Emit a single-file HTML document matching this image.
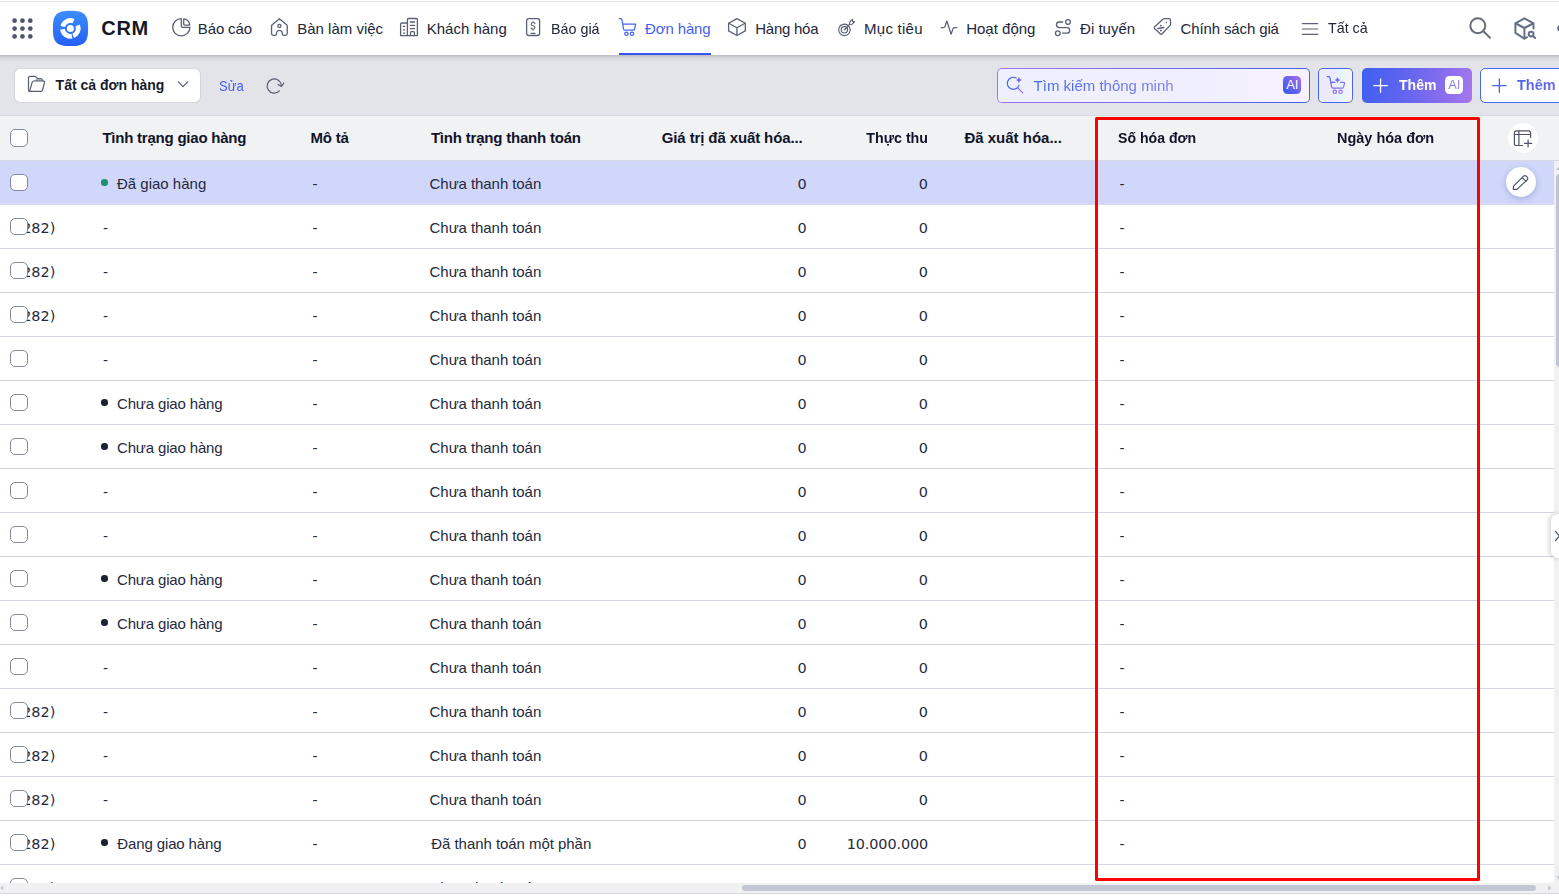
<!DOCTYPE html>
<html lang="vi"><head><meta charset="utf-8"><title>CRM - Đơn hàng</title>
<style>

*{box-sizing:border-box;margin:0;padding:0}
html,body{width:1559px;height:896px;overflow:hidden;background:#e2e4e9}
body{position:relative;font-family:"Liberation Sans", Arial, sans-serif;font-size:15px;color:#1c2133;line-height:20px}
span{white-space:nowrap;line-height:20px;display:block}
.abs{position:absolute}
#top{position:absolute;left:0;top:0;width:1559px;height:55px;background:#fff}
#topline{position:absolute;left:0;top:1px;width:1559px;height:1px;background:#e4e4e4}
#shadow{position:absolute;left:0;top:55px;width:1559px;height:6px;background:linear-gradient(to bottom,rgba(62,64,74,.24),rgba(62,64,74,.09) 45%,rgba(62,64,74,0))}
#thead{position:absolute;left:0;top:115px;width:1559px;height:46px;background:#f1f2f4;border-top:1px solid #d9dbe1;border-bottom:1px solid #d6d9e0}
#tbody{position:absolute;left:0;top:161px;width:1554px;height:735px;background:#fff;overflow:hidden}
.row{position:absolute;left:0;width:1554px;height:44px;border-bottom:1px solid #d4d8e2}
.row.sel{background:#d0d7fa;border-bottom-color:#d9dcec}
.cb{position:absolute;left:10px;width:18px;height:17px;border:1px solid #8289a0;border-radius:5px;background:#fff}
.dot{position:absolute;width:6.6px;height:6.6px;border-radius:50%;background:#1c2133}
#icons{position:absolute;left:0;top:0;width:1559px;height:896px;pointer-events:none}
.grad{-webkit-background-clip:text;background-clip:text;color:transparent!important;-webkit-text-fill-color:transparent}

</style></head><body>
<div id="top"></div><div id="topline"></div><div id="shadow"></div>
<span style="position:absolute;left:101.20px;top:18.07px;font-size:20px;font-weight:700;color:#14182a;letter-spacing:0.750px;">CRM</span>
<span style="position:absolute;left:197.80px;top:18.80px;font-size:15px;color:#222739;letter-spacing:-0.133px;">Báo cáo</span>
<span style="position:absolute;left:297.20px;top:18.80px;font-size:15px;color:#222739;">Bàn làm việc</span>
<span style="position:absolute;left:426.70px;top:18.80px;font-size:15px;color:#222739;">Khách hàng</span>
<span style="position:absolute;left:551.10px;top:18.80px;font-size:15px;color:#222739;transform:scaleX(0.9549);transform-origin:0 50%;">Báo giá</span>
<span style="position:absolute;left:645.10px;top:18.80px;font-size:15px;color:#4361ee;letter-spacing:-0.143px;">Đơn hàng</span>
<span style="position:absolute;left:755.20px;top:18.80px;font-size:15px;color:#222739;letter-spacing:-0.243px;">Hàng hóa</span>
<span style="position:absolute;left:864.10px;top:18.80px;font-size:15px;color:#222739;letter-spacing:0.243px;">Mục tiêu</span>
<span style="position:absolute;left:966.20px;top:18.80px;font-size:15px;color:#222739;">Hoạt động</span>
<span style="position:absolute;left:1080.10px;top:18.80px;font-size:15px;color:#222739;">Đi tuyến</span>
<span style="position:absolute;left:1180.50px;top:18.80px;font-size:15px;color:#222739;letter-spacing:-0.123px;">Chính sách giá</span>
<span style="position:absolute;left:1328.20px;top:17.80px;font-size:15px;color:#222739;transform:scaleX(0.9524);transform-origin:0 50%;">Tất cả</span>
<div class="abs" style="left:619px;top:53px;width:92px;height:2px;background:#3554ee"></div>
<div class="abs" style="left:15px;top:68.5px;width:185px;height:33.5px;background:#fff;border-radius:5px;box-shadow:0 0 0 .6px rgba(150,158,180,.35)"></div>
<span style="position:absolute;left:55.60px;top:75.15px;font-size:14px;font-weight:700;color:#171b2d;">Tất cả đơn hàng</span>
<span style="position:absolute;left:219.20px;top:75.80px;font-size:15px;color:#4a5cf6;transform:scaleX(0.8714);transform-origin:0 50%;">Sửa</span>
<div class="abs" style="left:997px;top:68px;width:313px;height:35px;border-radius:5px;padding:1.2px;background:linear-gradient(90deg,#a571ef 0%,#7a6af0 45%,#3f62f1 100%)"><div style="width:100%;height:100%;border-radius:3.8px;background:linear-gradient(90deg,#eeeffd,#f0effd 60%,#f7f1fd)"></div></div>
<span class="grad" style="position:absolute;left:1033.60px;top:75.80px;font-size:15px;color:#5a74ea;background-image:linear-gradient(90deg,#4669ef,#7f7de6);">Tìm kiếm thông minh</span>
<div class="abs" style="left:1283px;top:76px;width:18px;height:18px;border-radius:4.5px;background:linear-gradient(45deg,#3b5bf1 10%,#6d63ec 55%,#ad70ea 100%)"></div>
<span style="position:absolute;left:1286.20px;top:75.29px;font-size:13px;color:#fff;">AI</span>
<div class="abs" style="left:1318px;top:68px;width:35px;height:35px;border-radius:5px;padding:1.2px;background:#4866f1"><div style="width:100%;height:100%;border-radius:3.8px;background:linear-gradient(90deg,#efeafc 0%,#ebebfd 40%,#e6f6fe 68%,#fdf3ee 100%)"></div></div>
<div class="abs" style="left:1362px;top:68px;width:110px;height:35px;border-radius:5px;background:linear-gradient(100deg,#3f5ff1 0%,#5d64ee 35%,#8a6eee 75%,#a876ee 100%)"></div>
<span style="position:absolute;left:1398.50px;top:74.97px;font-size:14.5px;font-weight:700;color:#fff;transform:scaleX(0.9700);transform-origin:0 50%;">Thêm</span>
<div class="abs" style="left:1445px;top:76px;width:18px;height:18px;border-radius:4.5px;background:#fff"></div>
<span class="grad" style="position:absolute;left:1448.20px;top:75.29px;font-size:13px;color:#7a80ec;background-image:linear-gradient(90deg,#5b7aee,#a886ec);">AI</span>
<div class="abs" style="left:1480px;top:68px;width:100px;height:35px;border-radius:5px;background:#fff;border:1.2px solid #4a67f1"></div>
<span class="grad" style="position:absolute;left:1517.00px;top:74.97px;font-size:14.5px;font-weight:700;color:#4a63f0;background-image:linear-gradient(90deg,#4463f0,#6f6aea);">Thêm</span>
<div id="thead"></div>
<span style="position:absolute;left:102.40px;top:127.80px;font-size:15px;font-weight:700;color:#10142a;letter-spacing:-0.226px;">Tình trạng giao hàng</span>
<span style="position:absolute;left:310.40px;top:127.80px;font-size:15px;font-weight:700;color:#10142a;letter-spacing:-0.150px;">Mô tả</span>
<span style="position:absolute;left:430.90px;top:127.80px;font-size:15px;font-weight:700;color:#10142a;letter-spacing:-0.200px;">Tình trạng thanh toán</span>
<span style="position:absolute;left:964.40px;top:127.80px;font-size:15px;font-weight:700;color:#10142a;">Đã xuất hóa...</span>
<span style="position:absolute;left:1118.00px;top:127.80px;font-size:15px;font-weight:700;color:#10142a;transform:scaleX(0.9398);transform-origin:0 50%;">Số hóa đơn</span>
<span style="position:absolute;left:1336.50px;top:127.80px;font-size:15px;font-weight:700;color:#10142a;transform:scaleX(0.9650);transform-origin:0 50%;">Ngày hóa đơn</span>
<span style="position:absolute;right:756.40px;top:127.80px;font-size:15px;font-weight:700;color:#10142a;letter-spacing:-0.114px;">Giá trị đã xuất hóa...</span>
<span style="position:absolute;right:631.40px;top:127.80px;font-size:15px;font-weight:700;color:#10142a;transform:scaleX(0.9492);transform-origin:100% 50%;">Thực thu</span>
<div class="cb" style="top:129px;height:18px"></div>
<div class="abs" style="left:1508px;top:123px;width:30.4px;height:30.4px;border-radius:50%;background:#fff"></div>
<div id="tbody">
<div class="row sel" style="top:0px">
<div class="cb" style="top:13px"></div>
<div class="dot" style="left:101.2px;top:18.2px;background:#1d8f6f"></div>
<span style="position:absolute;left:117.00px;top:12.80px;font-size:15px;color:#242a3d;">Đã giao hàng</span>
<span style="position:absolute;left:312.50px;top:12.80px;font-size:15px;color:#242a3d;">-</span>
<span style="position:absolute;left:429.60px;top:12.80px;font-size:15px;color:#242a3d;letter-spacing:-0.071px;">Chưa thanh toán</span>
<span style="position:absolute;right:747.40px;top:13.02px;font-size:14.4px;font-family:'DejaVu Sans','Liberation Sans',sans-serif;color:#242a3d;">0</span>
<span style="position:absolute;right:626.20px;top:13.02px;font-size:14.4px;font-family:'DejaVu Sans','Liberation Sans',sans-serif;color:#242a3d;">0</span>
<span style="position:absolute;left:1119.60px;top:12.80px;font-size:15px;color:#242a3d;">-</span>
</div>
<div class="row" style="top:44px">
<span style="position:absolute;left:22.20px;top:13.02px;font-size:14.4px;font-family:'DejaVu Sans','Liberation Sans',sans-serif;color:#242a3d;">282)</span>
<div class="cb" style="top:13px"></div>
<span style="position:absolute;left:103.00px;top:12.80px;font-size:15px;color:#242a3d;">-</span>
<span style="position:absolute;left:312.50px;top:12.80px;font-size:15px;color:#242a3d;">-</span>
<span style="position:absolute;left:429.60px;top:12.80px;font-size:15px;color:#242a3d;letter-spacing:-0.071px;">Chưa thanh toán</span>
<span style="position:absolute;right:747.40px;top:13.02px;font-size:14.4px;font-family:'DejaVu Sans','Liberation Sans',sans-serif;color:#242a3d;">0</span>
<span style="position:absolute;right:626.20px;top:13.02px;font-size:14.4px;font-family:'DejaVu Sans','Liberation Sans',sans-serif;color:#242a3d;">0</span>
<span style="position:absolute;left:1119.60px;top:12.80px;font-size:15px;color:#242a3d;">-</span>
</div>
<div class="row" style="top:88px">
<span style="position:absolute;left:22.20px;top:13.02px;font-size:14.4px;font-family:'DejaVu Sans','Liberation Sans',sans-serif;color:#242a3d;">282)</span>
<div class="cb" style="top:13px"></div>
<span style="position:absolute;left:103.00px;top:12.80px;font-size:15px;color:#242a3d;">-</span>
<span style="position:absolute;left:312.50px;top:12.80px;font-size:15px;color:#242a3d;">-</span>
<span style="position:absolute;left:429.60px;top:12.80px;font-size:15px;color:#242a3d;letter-spacing:-0.071px;">Chưa thanh toán</span>
<span style="position:absolute;right:747.40px;top:13.02px;font-size:14.4px;font-family:'DejaVu Sans','Liberation Sans',sans-serif;color:#242a3d;">0</span>
<span style="position:absolute;right:626.20px;top:13.02px;font-size:14.4px;font-family:'DejaVu Sans','Liberation Sans',sans-serif;color:#242a3d;">0</span>
<span style="position:absolute;left:1119.60px;top:12.80px;font-size:15px;color:#242a3d;">-</span>
</div>
<div class="row" style="top:132px">
<span style="position:absolute;left:22.20px;top:13.02px;font-size:14.4px;font-family:'DejaVu Sans','Liberation Sans',sans-serif;color:#242a3d;">282)</span>
<div class="cb" style="top:13px"></div>
<span style="position:absolute;left:103.00px;top:12.80px;font-size:15px;color:#242a3d;">-</span>
<span style="position:absolute;left:312.50px;top:12.80px;font-size:15px;color:#242a3d;">-</span>
<span style="position:absolute;left:429.60px;top:12.80px;font-size:15px;color:#242a3d;letter-spacing:-0.071px;">Chưa thanh toán</span>
<span style="position:absolute;right:747.40px;top:13.02px;font-size:14.4px;font-family:'DejaVu Sans','Liberation Sans',sans-serif;color:#242a3d;">0</span>
<span style="position:absolute;right:626.20px;top:13.02px;font-size:14.4px;font-family:'DejaVu Sans','Liberation Sans',sans-serif;color:#242a3d;">0</span>
<span style="position:absolute;left:1119.60px;top:12.80px;font-size:15px;color:#242a3d;">-</span>
</div>
<div class="row" style="top:176px">
<div class="cb" style="top:13px"></div>
<span style="position:absolute;left:103.00px;top:12.80px;font-size:15px;color:#242a3d;">-</span>
<span style="position:absolute;left:312.50px;top:12.80px;font-size:15px;color:#242a3d;">-</span>
<span style="position:absolute;left:429.60px;top:12.80px;font-size:15px;color:#242a3d;letter-spacing:-0.071px;">Chưa thanh toán</span>
<span style="position:absolute;right:747.40px;top:13.02px;font-size:14.4px;font-family:'DejaVu Sans','Liberation Sans',sans-serif;color:#242a3d;">0</span>
<span style="position:absolute;right:626.20px;top:13.02px;font-size:14.4px;font-family:'DejaVu Sans','Liberation Sans',sans-serif;color:#242a3d;">0</span>
<span style="position:absolute;left:1119.60px;top:12.80px;font-size:15px;color:#242a3d;">-</span>
</div>
<div class="row" style="top:220px">
<div class="cb" style="top:13px"></div>
<div class="dot" style="left:101.2px;top:18.2px;background:#1c2133"></div>
<span style="position:absolute;left:117.00px;top:12.80px;font-size:15px;color:#242a3d;letter-spacing:-0.154px;">Chưa giao hàng</span>
<span style="position:absolute;left:312.50px;top:12.80px;font-size:15px;color:#242a3d;">-</span>
<span style="position:absolute;left:429.60px;top:12.80px;font-size:15px;color:#242a3d;letter-spacing:-0.071px;">Chưa thanh toán</span>
<span style="position:absolute;right:747.40px;top:13.02px;font-size:14.4px;font-family:'DejaVu Sans','Liberation Sans',sans-serif;color:#242a3d;">0</span>
<span style="position:absolute;right:626.20px;top:13.02px;font-size:14.4px;font-family:'DejaVu Sans','Liberation Sans',sans-serif;color:#242a3d;">0</span>
<span style="position:absolute;left:1119.60px;top:12.80px;font-size:15px;color:#242a3d;">-</span>
</div>
<div class="row" style="top:264px">
<div class="cb" style="top:13px"></div>
<div class="dot" style="left:101.2px;top:18.2px;background:#1c2133"></div>
<span style="position:absolute;left:117.00px;top:12.80px;font-size:15px;color:#242a3d;letter-spacing:-0.154px;">Chưa giao hàng</span>
<span style="position:absolute;left:312.50px;top:12.80px;font-size:15px;color:#242a3d;">-</span>
<span style="position:absolute;left:429.60px;top:12.80px;font-size:15px;color:#242a3d;letter-spacing:-0.071px;">Chưa thanh toán</span>
<span style="position:absolute;right:747.40px;top:13.02px;font-size:14.4px;font-family:'DejaVu Sans','Liberation Sans',sans-serif;color:#242a3d;">0</span>
<span style="position:absolute;right:626.20px;top:13.02px;font-size:14.4px;font-family:'DejaVu Sans','Liberation Sans',sans-serif;color:#242a3d;">0</span>
<span style="position:absolute;left:1119.60px;top:12.80px;font-size:15px;color:#242a3d;">-</span>
</div>
<div class="row" style="top:308px">
<div class="cb" style="top:13px"></div>
<span style="position:absolute;left:103.00px;top:12.80px;font-size:15px;color:#242a3d;">-</span>
<span style="position:absolute;left:312.50px;top:12.80px;font-size:15px;color:#242a3d;">-</span>
<span style="position:absolute;left:429.60px;top:12.80px;font-size:15px;color:#242a3d;letter-spacing:-0.071px;">Chưa thanh toán</span>
<span style="position:absolute;right:747.40px;top:13.02px;font-size:14.4px;font-family:'DejaVu Sans','Liberation Sans',sans-serif;color:#242a3d;">0</span>
<span style="position:absolute;right:626.20px;top:13.02px;font-size:14.4px;font-family:'DejaVu Sans','Liberation Sans',sans-serif;color:#242a3d;">0</span>
<span style="position:absolute;left:1119.60px;top:12.80px;font-size:15px;color:#242a3d;">-</span>
</div>
<div class="row" style="top:352px">
<div class="cb" style="top:13px"></div>
<span style="position:absolute;left:103.00px;top:12.80px;font-size:15px;color:#242a3d;">-</span>
<span style="position:absolute;left:312.50px;top:12.80px;font-size:15px;color:#242a3d;">-</span>
<span style="position:absolute;left:429.60px;top:12.80px;font-size:15px;color:#242a3d;letter-spacing:-0.071px;">Chưa thanh toán</span>
<span style="position:absolute;right:747.40px;top:13.02px;font-size:14.4px;font-family:'DejaVu Sans','Liberation Sans',sans-serif;color:#242a3d;">0</span>
<span style="position:absolute;right:626.20px;top:13.02px;font-size:14.4px;font-family:'DejaVu Sans','Liberation Sans',sans-serif;color:#242a3d;">0</span>
<span style="position:absolute;left:1119.60px;top:12.80px;font-size:15px;color:#242a3d;">-</span>
</div>
<div class="row" style="top:396px">
<div class="cb" style="top:13px"></div>
<div class="dot" style="left:101.2px;top:18.2px;background:#1c2133"></div>
<span style="position:absolute;left:117.00px;top:12.80px;font-size:15px;color:#242a3d;letter-spacing:-0.154px;">Chưa giao hàng</span>
<span style="position:absolute;left:312.50px;top:12.80px;font-size:15px;color:#242a3d;">-</span>
<span style="position:absolute;left:429.60px;top:12.80px;font-size:15px;color:#242a3d;letter-spacing:-0.071px;">Chưa thanh toán</span>
<span style="position:absolute;right:747.40px;top:13.02px;font-size:14.4px;font-family:'DejaVu Sans','Liberation Sans',sans-serif;color:#242a3d;">0</span>
<span style="position:absolute;right:626.20px;top:13.02px;font-size:14.4px;font-family:'DejaVu Sans','Liberation Sans',sans-serif;color:#242a3d;">0</span>
<span style="position:absolute;left:1119.60px;top:12.80px;font-size:15px;color:#242a3d;">-</span>
</div>
<div class="row" style="top:440px">
<div class="cb" style="top:13px"></div>
<div class="dot" style="left:101.2px;top:18.2px;background:#1c2133"></div>
<span style="position:absolute;left:117.00px;top:12.80px;font-size:15px;color:#242a3d;letter-spacing:-0.154px;">Chưa giao hàng</span>
<span style="position:absolute;left:312.50px;top:12.80px;font-size:15px;color:#242a3d;">-</span>
<span style="position:absolute;left:429.60px;top:12.80px;font-size:15px;color:#242a3d;letter-spacing:-0.071px;">Chưa thanh toán</span>
<span style="position:absolute;right:747.40px;top:13.02px;font-size:14.4px;font-family:'DejaVu Sans','Liberation Sans',sans-serif;color:#242a3d;">0</span>
<span style="position:absolute;right:626.20px;top:13.02px;font-size:14.4px;font-family:'DejaVu Sans','Liberation Sans',sans-serif;color:#242a3d;">0</span>
<span style="position:absolute;left:1119.60px;top:12.80px;font-size:15px;color:#242a3d;">-</span>
</div>
<div class="row" style="top:484px">
<div class="cb" style="top:13px"></div>
<span style="position:absolute;left:103.00px;top:12.80px;font-size:15px;color:#242a3d;">-</span>
<span style="position:absolute;left:312.50px;top:12.80px;font-size:15px;color:#242a3d;">-</span>
<span style="position:absolute;left:429.60px;top:12.80px;font-size:15px;color:#242a3d;letter-spacing:-0.071px;">Chưa thanh toán</span>
<span style="position:absolute;right:747.40px;top:13.02px;font-size:14.4px;font-family:'DejaVu Sans','Liberation Sans',sans-serif;color:#242a3d;">0</span>
<span style="position:absolute;right:626.20px;top:13.02px;font-size:14.4px;font-family:'DejaVu Sans','Liberation Sans',sans-serif;color:#242a3d;">0</span>
<span style="position:absolute;left:1119.60px;top:12.80px;font-size:15px;color:#242a3d;">-</span>
</div>
<div class="row" style="top:528px">
<span style="position:absolute;left:22.20px;top:13.02px;font-size:14.4px;font-family:'DejaVu Sans','Liberation Sans',sans-serif;color:#242a3d;">282)</span>
<div class="cb" style="top:13px"></div>
<span style="position:absolute;left:103.00px;top:12.80px;font-size:15px;color:#242a3d;">-</span>
<span style="position:absolute;left:312.50px;top:12.80px;font-size:15px;color:#242a3d;">-</span>
<span style="position:absolute;left:429.60px;top:12.80px;font-size:15px;color:#242a3d;letter-spacing:-0.071px;">Chưa thanh toán</span>
<span style="position:absolute;right:747.40px;top:13.02px;font-size:14.4px;font-family:'DejaVu Sans','Liberation Sans',sans-serif;color:#242a3d;">0</span>
<span style="position:absolute;right:626.20px;top:13.02px;font-size:14.4px;font-family:'DejaVu Sans','Liberation Sans',sans-serif;color:#242a3d;">0</span>
<span style="position:absolute;left:1119.60px;top:12.80px;font-size:15px;color:#242a3d;">-</span>
</div>
<div class="row" style="top:572px">
<span style="position:absolute;left:22.20px;top:13.02px;font-size:14.4px;font-family:'DejaVu Sans','Liberation Sans',sans-serif;color:#242a3d;">282)</span>
<div class="cb" style="top:13px"></div>
<span style="position:absolute;left:103.00px;top:12.80px;font-size:15px;color:#242a3d;">-</span>
<span style="position:absolute;left:312.50px;top:12.80px;font-size:15px;color:#242a3d;">-</span>
<span style="position:absolute;left:429.60px;top:12.80px;font-size:15px;color:#242a3d;letter-spacing:-0.071px;">Chưa thanh toán</span>
<span style="position:absolute;right:747.40px;top:13.02px;font-size:14.4px;font-family:'DejaVu Sans','Liberation Sans',sans-serif;color:#242a3d;">0</span>
<span style="position:absolute;right:626.20px;top:13.02px;font-size:14.4px;font-family:'DejaVu Sans','Liberation Sans',sans-serif;color:#242a3d;">0</span>
<span style="position:absolute;left:1119.60px;top:12.80px;font-size:15px;color:#242a3d;">-</span>
</div>
<div class="row" style="top:616px">
<span style="position:absolute;left:22.20px;top:13.02px;font-size:14.4px;font-family:'DejaVu Sans','Liberation Sans',sans-serif;color:#242a3d;">282)</span>
<div class="cb" style="top:13px"></div>
<span style="position:absolute;left:103.00px;top:12.80px;font-size:15px;color:#242a3d;">-</span>
<span style="position:absolute;left:312.50px;top:12.80px;font-size:15px;color:#242a3d;">-</span>
<span style="position:absolute;left:429.60px;top:12.80px;font-size:15px;color:#242a3d;letter-spacing:-0.071px;">Chưa thanh toán</span>
<span style="position:absolute;right:747.40px;top:13.02px;font-size:14.4px;font-family:'DejaVu Sans','Liberation Sans',sans-serif;color:#242a3d;">0</span>
<span style="position:absolute;right:626.20px;top:13.02px;font-size:14.4px;font-family:'DejaVu Sans','Liberation Sans',sans-serif;color:#242a3d;">0</span>
<span style="position:absolute;left:1119.60px;top:12.80px;font-size:15px;color:#242a3d;">-</span>
</div>
<div class="row" style="top:660px">
<span style="position:absolute;left:22.20px;top:13.02px;font-size:14.4px;font-family:'DejaVu Sans','Liberation Sans',sans-serif;color:#242a3d;">282)</span>
<div class="cb" style="top:13px"></div>
<div class="dot" style="left:101.2px;top:18.2px;background:#1c2133"></div>
<span style="position:absolute;left:117.30px;top:12.80px;font-size:15px;color:#242a3d;letter-spacing:-0.123px;">Đang giao hàng</span>
<span style="position:absolute;left:312.50px;top:12.80px;font-size:15px;color:#242a3d;">-</span>
<span style="position:absolute;left:431.30px;top:12.80px;font-size:15px;color:#242a3d;letter-spacing:-0.048px;">Đã thanh toán một phần</span>
<span style="position:absolute;right:747.40px;top:13.02px;font-size:14.4px;font-family:'DejaVu Sans','Liberation Sans',sans-serif;color:#242a3d;">0</span>
<span style="position:absolute;right:625.90px;top:13.02px;font-size:14.4px;font-family:'DejaVu Sans','Liberation Sans',sans-serif;color:#242a3d;letter-spacing:-0.100px;">10.000.000</span>
<span style="position:absolute;left:1119.60px;top:12.80px;font-size:15px;color:#242a3d;">-</span>
</div>
<div class="row" style="top:704px">
<span style="position:absolute;left:22.20px;top:13.02px;font-size:14.4px;font-family:'DejaVu Sans','Liberation Sans',sans-serif;color:#242a3d;">282)</span>
<div class="cb" style="top:13px"></div>
<span style="position:absolute;left:103.00px;top:12.80px;font-size:15px;color:#242a3d;">-</span>
<span style="position:absolute;left:312.50px;top:12.80px;font-size:15px;color:#242a3d;">-</span>
<span style="position:absolute;left:429.60px;top:12.80px;font-size:15px;color:#242a3d;letter-spacing:-0.071px;">Chưa thanh toán</span>
<span style="position:absolute;right:747.40px;top:13.02px;font-size:14.4px;font-family:'DejaVu Sans','Liberation Sans',sans-serif;color:#242a3d;">11.000.000</span>
<span style="position:absolute;right:626.20px;top:13.02px;font-size:14.4px;font-family:'DejaVu Sans','Liberation Sans',sans-serif;color:#242a3d;">0</span>
<span style="position:absolute;left:1119.60px;top:12.80px;font-size:15px;color:#242a3d;">-</span>
</div>
</div>
<div class="abs" style="left:1506px;top:167px;width:30.4px;height:30.4px;border-radius:50%;background:#fff;box-shadow:0 2px 6px rgba(60,70,150,.28)"></div>
<div class="abs" style="left:1554px;top:161px;width:5px;height:722px;background:#f1f1f2"></div>
<div class="abs" style="left:1556px;top:173.5px;width:8px;height:193px;border-radius:4px;background:#c1c5d1"></div>
<div class="abs" style="left:0;top:883px;width:1559px;height:10px;background:#f1f1f2"></div>
<div class="abs" style="left:0;top:893px;width:1559px;height:1px;background:#d5d8e0"></div>
<div class="abs" style="left:0;top:894px;width:1559px;height:2px;background:#fff"></div>
<div class="abs" style="left:742px;top:885px;width:793.8px;height:6px;border-radius:3px;background:#c3c7d4"></div>
<div class="abs" style="left:1551px;top:514px;width:14px;height:44px;border-radius:7px 0 0 7px;background:#fff;box-shadow:-2px 0 5px rgba(60,65,90,.22)"></div>
<svg id="icons" width="1559" height="896" viewBox="0 0 1559 896" fill="none" stroke-linecap="round" stroke-linejoin="round">
<defs>
<linearGradient id="gLogo" x1="0" y1="0" x2="0" y2="1"><stop offset="0" stop-color="#3d8dfd"/><stop offset="1" stop-color="#2560f7"/></linearGradient>
<linearGradient id="gAi" gradientUnits="userSpaceOnUse" x1="1006" y1="86" x2="1024" y2="86"><stop offset="0" stop-color="#4363f0"/><stop offset=".55" stop-color="#5f66ee"/><stop offset="1" stop-color="#a772ea"/></linearGradient>
<linearGradient id="gCart" gradientUnits="userSpaceOnUse" x1="1326" y1="78" x2="1345" y2="92"><stop offset="0" stop-color="#4564f0"/><stop offset=".5" stop-color="#7a6bea"/><stop offset="1" stop-color="#a774ea"/></linearGradient>
</defs>
<!-- app grid -->
<g fill="#50576c" stroke="none">
<circle cx="14.6" cy="20.7" r="2.35"/><circle cx="22.45" cy="20.7" r="2.35"/><circle cx="30.3" cy="20.7" r="2.35"/>
<circle cx="14.6" cy="28.55" r="2.35"/><circle cx="22.45" cy="28.55" r="2.35"/><circle cx="30.3" cy="28.55" r="2.35"/>
<circle cx="14.6" cy="36.4" r="2.35"/><circle cx="22.45" cy="36.4" r="2.35"/><circle cx="30.3" cy="36.4" r="2.35"/>
</g>
<!-- logo -->
<path d="M70.5 10.8 C84.5 10.8 88.1 14.4 88.1 28.4 C88.1 42.4 84.5 46 70.5 46 C56.5 46 52.9 42.4 52.9 28.4 C52.9 14.4 56.5 10.8 70.5 10.8 Z" fill="url(#gLogo)" stroke="none"/>
<g stroke="#fff" stroke-width="4.7" stroke-linecap="butt" fill="none">
<path d="M62.73 26.49 A7.9 7.9 0 0 1 73.61 21.18"/>
<path d="M77.72 25.44 A7.9 7.9 0 0 1 73.10 35.82"/>
<path d="M71.91 36.15 A7.9 7.9 0 0 1 62.54 29.23"/>
</g>
<circle cx="70.4" cy="28.4" r="3.5" fill="#fff" stroke="none"/>
<!-- nav icons -->
<g stroke="#5a6176" stroke-width="1.3">
<!-- pie -->
<path d="M181.3 18.7 A8.6 8.6 0 1 0 189.9 27.3 L182.5 27.3 Q181.3 27.3 181.3 26.1 Z"/>
<path d="M183.7 18.9 A6.3 6.3 0 0 1 189.7 25.2 L184.9 25.2 Q183.7 25.2 183.7 24 Z"/>
<!-- home -->
<path d="M279.4 18.8 L286.6 24.8 Q287.25 25.35 287.25 26.2 V33.6 Q287.25 35.35 285.5 35.35 H283.9 Q282.3 35.35 282.3 33.9 V33.2 A2.9 2.9 0 0 0 276.5 33.2 V33.9 Q276.5 35.35 274.9 35.35 H273.3 Q271.55 35.35 271.55 33.6 V26.2 Q271.55 25.35 272.2 24.8 Z"/>
<circle cx="279.4" cy="25.9" r="1.55"/>
<!-- buildings -->
<path d="M407.4 35.6 H400.6 V24.3 Q400.6 23 401.9 23 H407.4"/>
<path d="M407.4 35.6 V19.8 Q407.4 18.5 408.7 18.5 H416.1 Q417.4 18.5 417.4 19.8 V35.6 Z"/>
<path d="M410.3 22 H414.6 M410.3 25.4 H414.6 M410.3 28.6 H414.6"/>
<path d="M410.5 35.6 V32.6 Q410.5 31.6 411.5 31.6 H413.4 Q414.4 31.6 414.4 32.6 V35.6"/>
<path d="M403.5 26.4 H404.6 M403.5 29.8 H404.6 M403.5 33.2 H404.6"/>
<!-- quote -->
<rect x="526.6" y="18.6" width="13" height="16.9" rx="2.2"/>
<path d="M531.1 33.3 H535"/>
<path d="M535 23.6 Q534.6 22.5 533.05 22.5 Q531.2 22.5 531.2 24 Q531.2 25.3 533.05 25.7 Q535 26.1 535 27.6 Q535 29.2 533.05 29.2 Q531.4 29.2 531 28 M533.05 21.6 V22.5 M533.05 29.2 V30.1" stroke-width="1.1"/>
<!-- cube -->
<path d="M736.9 18.6 L745.3 23.2 V30.9 L736.9 35.5 L728.6 30.9 V23.2 Z"/>
<path d="M728.8 23.3 L736.9 27.7 L745.1 23.3 M736.9 27.7 V35.4"/>
<!-- target -->
<circle cx="844.4" cy="29.8" r="5.75" stroke-width="1.15"/>
<circle cx="844.4" cy="29.8" r="3.2" stroke-width="1.15"/>
<path d="M844.4 29.8 L849.6 24.4" stroke-width="1.25"/>
<path d="M849.5 24.5 L849.9 21.9 L852.3 19.4 L852.7 21.4 L854.6 21.9 L852.2 24.2 Z" stroke-width="1.15"/>
<!-- activity -->
<path d="M941.3 27.6 H943.6 Q944.6 27.6 944.9 26.6 L946.9 21 L951.1 34.2 L953 28.6 Q953.3 27.6 954.3 27.6 H956.8" stroke-width="1.25"/>
<!-- route -->
<circle cx="1068" cy="22" r="2.35"/>
<circle cx="1057.8" cy="33.2" r="2.35"/>
<path d="M1062.6 22 H1059.3 A2.8 2.8 0 0 0 1059.3 27.6 H1066.9 A2.8 2.8 0 0 1 1066.9 33.2 H1062.5"/>
<!-- price tag -->
<path d="M1164.6 18.6 H1168.9 Q1170.5 18.6 1170.5 20.2 V24.2 Q1170.5 25 1169.9 25.6 L1162.2 33.7 Q1161.2 34.7 1160.2 33.7 L1154.7 28.7 Q1153.8 27.7 1154.7 26.7 L1163.2 19.1 Q1163.8 18.6 1164.6 18.6 Z"/>
<path d="M1157.9 28.5 L1163.9 27.5"/>
<circle cx="1166.4" cy="22.5" r=".8" fill="#5a6176" stroke="none"/>
<circle cx="1160.9" cy="25.6" r=".95" fill="#5a6176" stroke="none"/>
<circle cx="1160.9" cy="30.5" r=".95" fill="#5a6176" stroke="none"/>
<!-- hamburger -->
<path d="M1302.4 23.6 H1317.7 M1302.4 29 H1317.7 M1302.4 34.4 H1317.7" stroke-width="1.2"/>
</g>
<!-- active cart -->
<g stroke="#4765ee" stroke-width="1.25">
<path d="M619.2 18.5 H620.6 Q621.8 18.5 622 19.7 L623.5 29 Q623.7 30.1 624.8 30.1 H633.4 Q634.4 30.1 634.6 29.1 L635.6 24 H622.8"/>
<circle cx="626.4" cy="33.7" r="1.7"/><circle cx="632" cy="33.7" r="1.7"/>
</g>
<!-- top-right search -->
<g stroke="#666c77" stroke-width="2" stroke-linecap="butt">
<circle cx="1477.8" cy="25.7" r="7.5"/>
<path d="M1483.1 31 L1490.6 38.4"/>
</g>
<!-- box search -->
<g stroke="#646e87" stroke-width="2">
<path d="M1533.5 28.6 V23.3 L1524.4 18.3 L1515.4 23.3 V32.2 Q1515.4 33 1516.1 33.4 L1524.4 38.6 L1527 37.2"/>
<path d="M1515.8 23.5 L1524.4 28 L1533.1 23.5 M1524.4 28 V38.4"/>
<circle cx="1531.1" cy="34.1" r="2.4"/>
<path d="M1533 36 L1535.2 38"/>
</g>
<circle cx="1560.6" cy="28.3" r="3.4" fill="#5e6880"/>
<!-- toolbar: folder -->
<g stroke="#565d72" stroke-width="1.2">
<path d="M29.6 91.3 Q28.5 91.3 28.5 90.2 V78 Q28.5 76.3 30.2 76.3 H34.6 Q35.3 76.3 35.8 76.8 L37.1 78.1 Q37.6 78.6 38.3 78.6 H40.6 Q42.3 78.6 43 81"/>
<path d="M33.4 81 L36.4 78.9 H40.6 Q42 78.9 42.7 81 Z" fill="#aab0c0" stroke="none"/>
<path d="M29.6 91.3 L32.2 82.2 Q32.6 81 33.9 81 H43.4 Q44.9 81 44.5 82.5 L42.6 90 Q42.3 91.3 41 91.3 Z"/>
<path d="M178.3 81.8 L183 86.6 L187.8 81.8"/>
<!-- refresh -->
<path d="M279.4 90.9 A7.1 7.1 0 1 1 281.3 85.2"/>
<path d="M278.1 84.4 L281.5 86.4 L283.7 83"/>
</g>
<!-- AI search icon -->
<g stroke="url(#gAi)" stroke-width="1.2">
<path d="M1016 77.9 A6 6 0 1 0 1019.1 85"/>
<path d="M1017.8 87.8 L1022.8 92.8"/>
</g>
<path d="M1018.9 76.9 Q1019.4399999999999 79.36 1021.9 79.9 Q1019.4399999999999 80.44000000000001 1018.9 82.9 Q1018.36 80.44000000000001 1015.9 79.9 Q1018.36 79.36 1018.9 76.9 Z" fill="#7466ec" stroke="none"/>
<!-- AI cart -->
<g stroke="url(#gCart)" stroke-width="1.2">
<path d="M1327.2 76.6 H1328.6 Q1329.8 76.6 1330 77.8 L1331.6 87 Q1331.8 88.2 1333 88.2 H1342.2 Q1343.3 88.2 1343.5 87.1 L1344.5 83.4 Q1344.8 82.4 1343.7 82.4 H1340.4"/>
<path d="M1331 82.4 H1334.9"/>
<circle cx="1334.8" cy="91.8" r="1.7"/><circle cx="1340.6" cy="91.8" r="1.7"/>
</g>
<path d="M1337.5 77.1 Q1338.022 79.478 1340.4 80.0 Q1338.022 80.522 1337.5 82.9 Q1336.978 80.522 1334.6 80.0 Q1336.978 79.478 1337.5 77.1 Z" fill="#7868ec" stroke="none"/>
<!-- plus icons -->
<path d="M1373.7 85.6 H1387.4 M1380.55 78.8 V92.4" stroke="#fff" stroke-width="1.3"/>
<path d="M1492.5 85.6 H1506.2 M1499.35 78.8 V92.4" stroke="#4a66f0" stroke-width="1.3"/>
<!-- column settings -->
<g stroke="#4d546a" stroke-width="1.2">
<path d="M1530.6 137.6 V133 Q1530.6 130.9 1528.5 130.9 H1516.5 Q1514.4 130.9 1514.4 133 V143.4 Q1514.4 145.5 1516.5 145.5 H1522.6"/>
<path d="M1518.9 131 V145.4"/>
<path d="M1514.5 134.5 H1530.5"/>
<path d="M1524.5 143.4 H1531.7 M1528.1 139.9 V146.9"/>
<!-- pencil -->
<path d="M1513.4 189.4 V186.3 L1523.3 176.4 A2.3 2.3 0 0 1 1526.5 176.4 L1527 176.9 A2.3 2.3 0 0 1 1527 180.1 L1516.9 189.4 Z"/>
<path d="M1522.3 177.6 L1525.9 181.2"/>
</g>
<!-- scrollbar arrows / chevron -->
<path d="M0.3 888 L3.2 885.4 V890.6 Z" fill="#c3c7d4" stroke="none"/>
<path d="M1551.4 888 L1548.2 885 V891 Z" fill="#c3c7d4" stroke="none"/>
<path d="M1556 876.2 H1560 L1558.5 879.6 Z" fill="#c3c7d4" stroke="none"/>
<path d="M1556 170 H1560 L1558.5 166.8 Z" fill="#c3c7d4" stroke="none"/>
<path d="M1555.4 531.4 L1559.6 536 L1555.4 540.6" stroke="#464d63" stroke-width="1.3" fill="none"/>
<!-- red annotation rectangle -->
<rect x="1096.5" y="118.5" width="382" height="761" stroke="#ff0000" stroke-width="3" stroke-linejoin="round" fill="none"/>
</svg>

</body></html>
